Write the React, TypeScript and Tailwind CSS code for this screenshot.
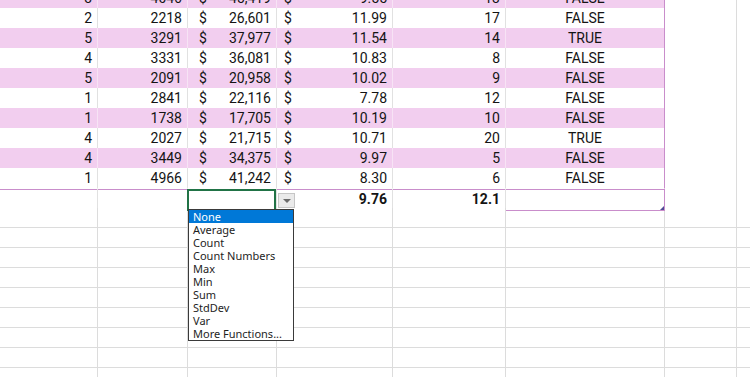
import type { ReactNode } from "react";

type Row = [string, string, string, string, string, string];

const rows: Row[] = [
  ["3", "4046", "45,419", "9.55", "13", "FALSE"],
  ["2", "2218", "26,601", "11.99", "17", "FALSE"],
  ["5", "3291", "37,977", "11.54", "14", "TRUE"],
  ["4", "3331", "36,081", "10.83", "8", "FALSE"],
  ["5", "2091", "20,958", "10.02", "9", "FALSE"],
  ["1", "2841", "22,116", "7.78", "12", "FALSE"],
  ["1", "1738", "17,705", "10.19", "10", "FALSE"],
  ["4", "2027", "21,715", "10.71", "20", "TRUE"],
  ["4", "3449", "34,375", "9.97", "5", "FALSE"],
  ["1", "4966", "41,242", "8.30", "6", "FALSE"],
];

const functions = [
  "None",
  "Average",
  "Count",
  "Count Numbers",
  "Max",
  "Min",
  "Sum",
  "StdDev",
  "Var",
  "More Functions...",
];

const gridCols = "grid h-5 grid-cols-[98px_90px_89px_116px_113px_159px_72px_1fr]";

function Cell({ band, last, className = "", children }: { band: boolean; last?: boolean; className?: string; children?: ReactNode }) {
  return (
    <div
      className={`flex items-center border-b border-r border-b-[#C98DCB] px-[5px] ${
        band ? "bg-[#F2CEEF]" : "bg-white"
      } ${last ? "border-r-[#C98DCB]" : band ? "border-r-[#F7E3F5]" : "border-r-[#E1E1E1]"} ${className}`}
    >
      {children}
    </div>
  );
}

function Blank({ className = "" }: { className?: string }) {
  return <div className={`border-b border-r border-[#DCDCDC] bg-white ${className}`} />;
}

function Money({ value, wide }: { value: string; wide?: boolean }) {
  return (
    <>
      <span className={wide ? "pl-[6px]" : "pl-[2px]"}>$</span>
      <span className="ml-auto">{value}</span>
    </>
  );
}

function DataRow({ row, band }: { row: Row; band: boolean }) {
  return (
    <div className={gridCols}>
      <Cell band={band} className="justify-end">{row[0]}</Cell>
      <Cell band={band} className="justify-end">{row[1]}</Cell>
      <Cell band={band}>
        <Money value={row[2]} wide />
      </Cell>
      <Cell band={band}>
        <Money value={row[3]} />
      </Cell>
      <Cell band={band} className="justify-end">{row[4]}</Cell>
      <Cell band={band} last className="justify-center">{row[5]}</Cell>
      <Blank />
      <Blank className="border-r-0" />
    </div>
  );
}

function TotalsDropdown() {
  return (
    <>
      <div className="pointer-events-none absolute -left-px top-0 -bottom-px right-0 border-2 border-[#217346]" />
      <div className="absolute left-[90px] top-[4px] flex h-[15px] w-[17px] items-center justify-center border border-[#C6C6C6] bg-[#EAEAEA]">
        <span className="h-0 w-0 border-x-[4px] border-t-[4px] border-x-transparent border-t-[#6B6B6B]" />
      </div>
      <ul className="absolute left-0 top-5 z-10 w-[106px] border border-[#3A3A3A] bg-white font-['Noto_Sans',sans-serif] text-[11px] text-[#1E1E1E]">
        {functions.map((name, i) => (
          <li
            key={name}
            className={`h-[13px] pl-[4px] leading-[13px] ${i === 0 ? "bg-[#0078D7] text-white" : ""}`}
          >
            {name}
          </li>
        ))}
      </ul>
    </>
  );
}

function TotalRow() {
  const top = "border-t border-t-white shadow-[inset_0_1px_0_#C98DCB]";
  return (
    <div className={gridCols}>
      <div className={`border-b border-r border-b-[#C98DCB] border-r-[#E1E1E1] bg-white ${top}`} />
      <div className={`border-b border-r border-b-[#C98DCB] border-r-[#E1E1E1] bg-white ${top}`} />
      <div className={`relative border-b border-r border-b-[#C98DCB] border-r-[#E1E1E1] bg-white ${top}`}>
        <TotalsDropdown />
      </div>
      <div className={`flex items-center justify-end border-b border-r border-b-[#C98DCB] border-r-[#E1E1E1] bg-white px-[5px] font-bold ${top}`}>
        9.76
      </div>
      <div className={`flex items-center justify-end border-b border-r border-b-[#C98DCB] border-r-[#E1E1E1] bg-white px-[5px] font-bold ${top}`}>
        12.1
      </div>
      <div className={`relative border-b border-r border-[#C98DCB] bg-white ${top}`}>
        <span className="absolute bottom-0 right-0 h-0 w-0 border-b-[4px] border-l-[4px] border-b-[#4F4A94] border-l-transparent" />
      </div>
      <Blank />
      <Blank className="border-r-0" />
    </div>
  );
}

function EmptyRow() {
  return (
    <div className={gridCols}>
      <Blank />
      <Blank />
      <Blank />
      <Blank />
      <Blank />
      <Blank />
      <Blank />
      <Blank className="border-r-0" />
    </div>
  );
}

export default function App() {
  return (
    <div className="h-[377px] w-[750px] overflow-hidden bg-white">
      <div className="mt-[-12px] font-['Roboto',sans-serif] text-[14px] text-[#141414]">
        {rows.map((row, i) => (
          <DataRow key={i} row={row} band={i % 2 === 0} />
        ))}
        <TotalRow />
        {Array.from({ length: 10 }, (_, i) => (
          <EmptyRow key={i} />
        ))}
      </div>
    </div>
  );
}
